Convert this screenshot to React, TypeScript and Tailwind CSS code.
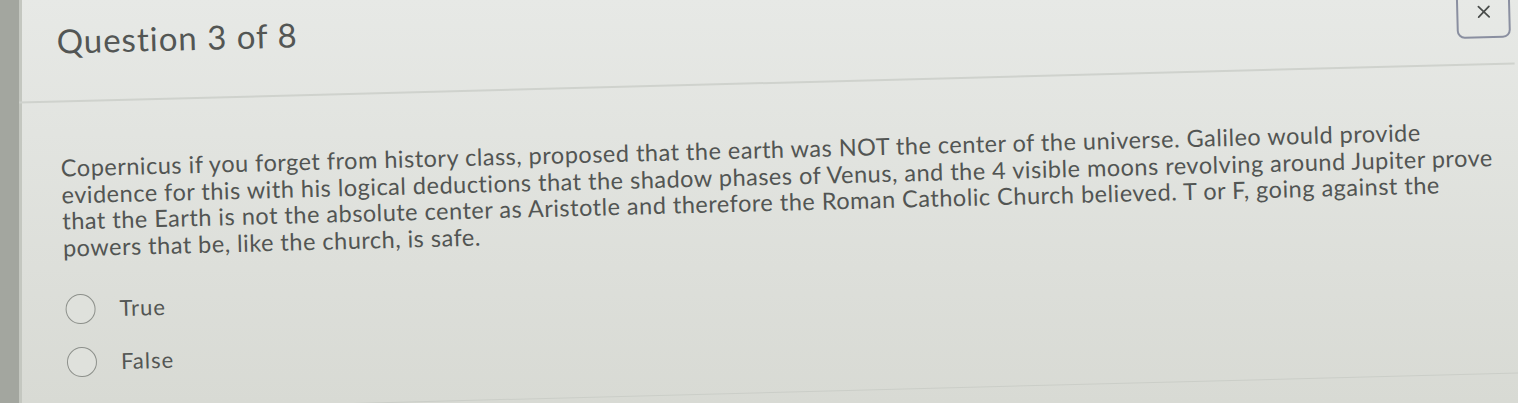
import { useState } from 'react';
import { X } from 'lucide-react';

const questionLines = [
    'Copernicus if you forget from history class, proposed that the earth was NOT the center of the universe. Galileo would provide',
    'evidence for this with his logical deductions that the shadow phases of Venus, and the 4 visible moons revolving around Jupiter prove',
    'that the Earth is not the absolute center as Aristotle and therefore the Roman Catholic Church believed. T or F, going against the',
    'powers that be, like the church, is safe.',
];

const options = ['True', 'False'];

export default function App() {
    const [selected, setSelected] = useState<string | null>(null);

    return (
        <div className="flex h-[403px] w-full overflow-hidden bg-linear-to-b from-[#e7e9e6] to-[#d8dad4] font-['Lato','Liberation_Sans',sans-serif] text-[#525553]">
            {/* left gutter */}
            <div className="w-[22px] shrink-0 bg-[#a3a69f] border-r-[3px] border-[#c4c7c0]" />

            <div className="flex-1 flex flex-col rotate-[-1.5deg]">
                {/* Header */}
                <div className="flex justify-between items-start h-[84px] border-b-2 border-[#cfd2cd] pl-[39px]">
                    <h2 className="pt-[6px] text-[33px] leading-none tracking-[1px] text-[#535654]">Question 3 of 8</h2>
                    <button
                        className="mt-[3px] mr-[3px] w-[54px] h-[54px] rounded-[8px] border-2 border-[#8a8fa0] flex items-center justify-center text-[#4a4d4b]"
                        aria-label="Close"
                    >
                        <X size={21} strokeWidth={2} />
                    </button>
                </div>

                {/* Question body */}
                <div className="pl-[40px] pt-[52px] text-[23.5px] leading-[26.7px] tracking-[0.5px] whitespace-nowrap">
                    {questionLines.map((line, i) => (
                        <p key={i}>{line}</p>
                    ))}
                </div>

                {/* Options */}
                <div className="flex flex-col gap-[23px] pl-[41px] mt-[33px]">
                    {options.map(opt => (
                        <label key={opt} className="flex items-center gap-[24px] cursor-pointer" onClick={() => setSelected(opt)}>
                            <span className="w-[30px] h-[30px] rounded-full border-[1.5px] border-[#8d908b] bg-[#dfe1dc] flex items-center justify-center">
                                {selected === opt && <span className="w-[14px] h-[14px] rounded-full bg-[#4d504e]" />}
                            </span>
                            <span className="text-[22px] leading-none tracking-[1px] text-[#535654]">{opt}</span>
                        </label>
                    ))}
                </div>

                {/* bottom edge of the card */}
                <div className="mt-auto mb-[10px] border-b border-[#cbcec8]" />
            </div>
        </div>
    );
}
